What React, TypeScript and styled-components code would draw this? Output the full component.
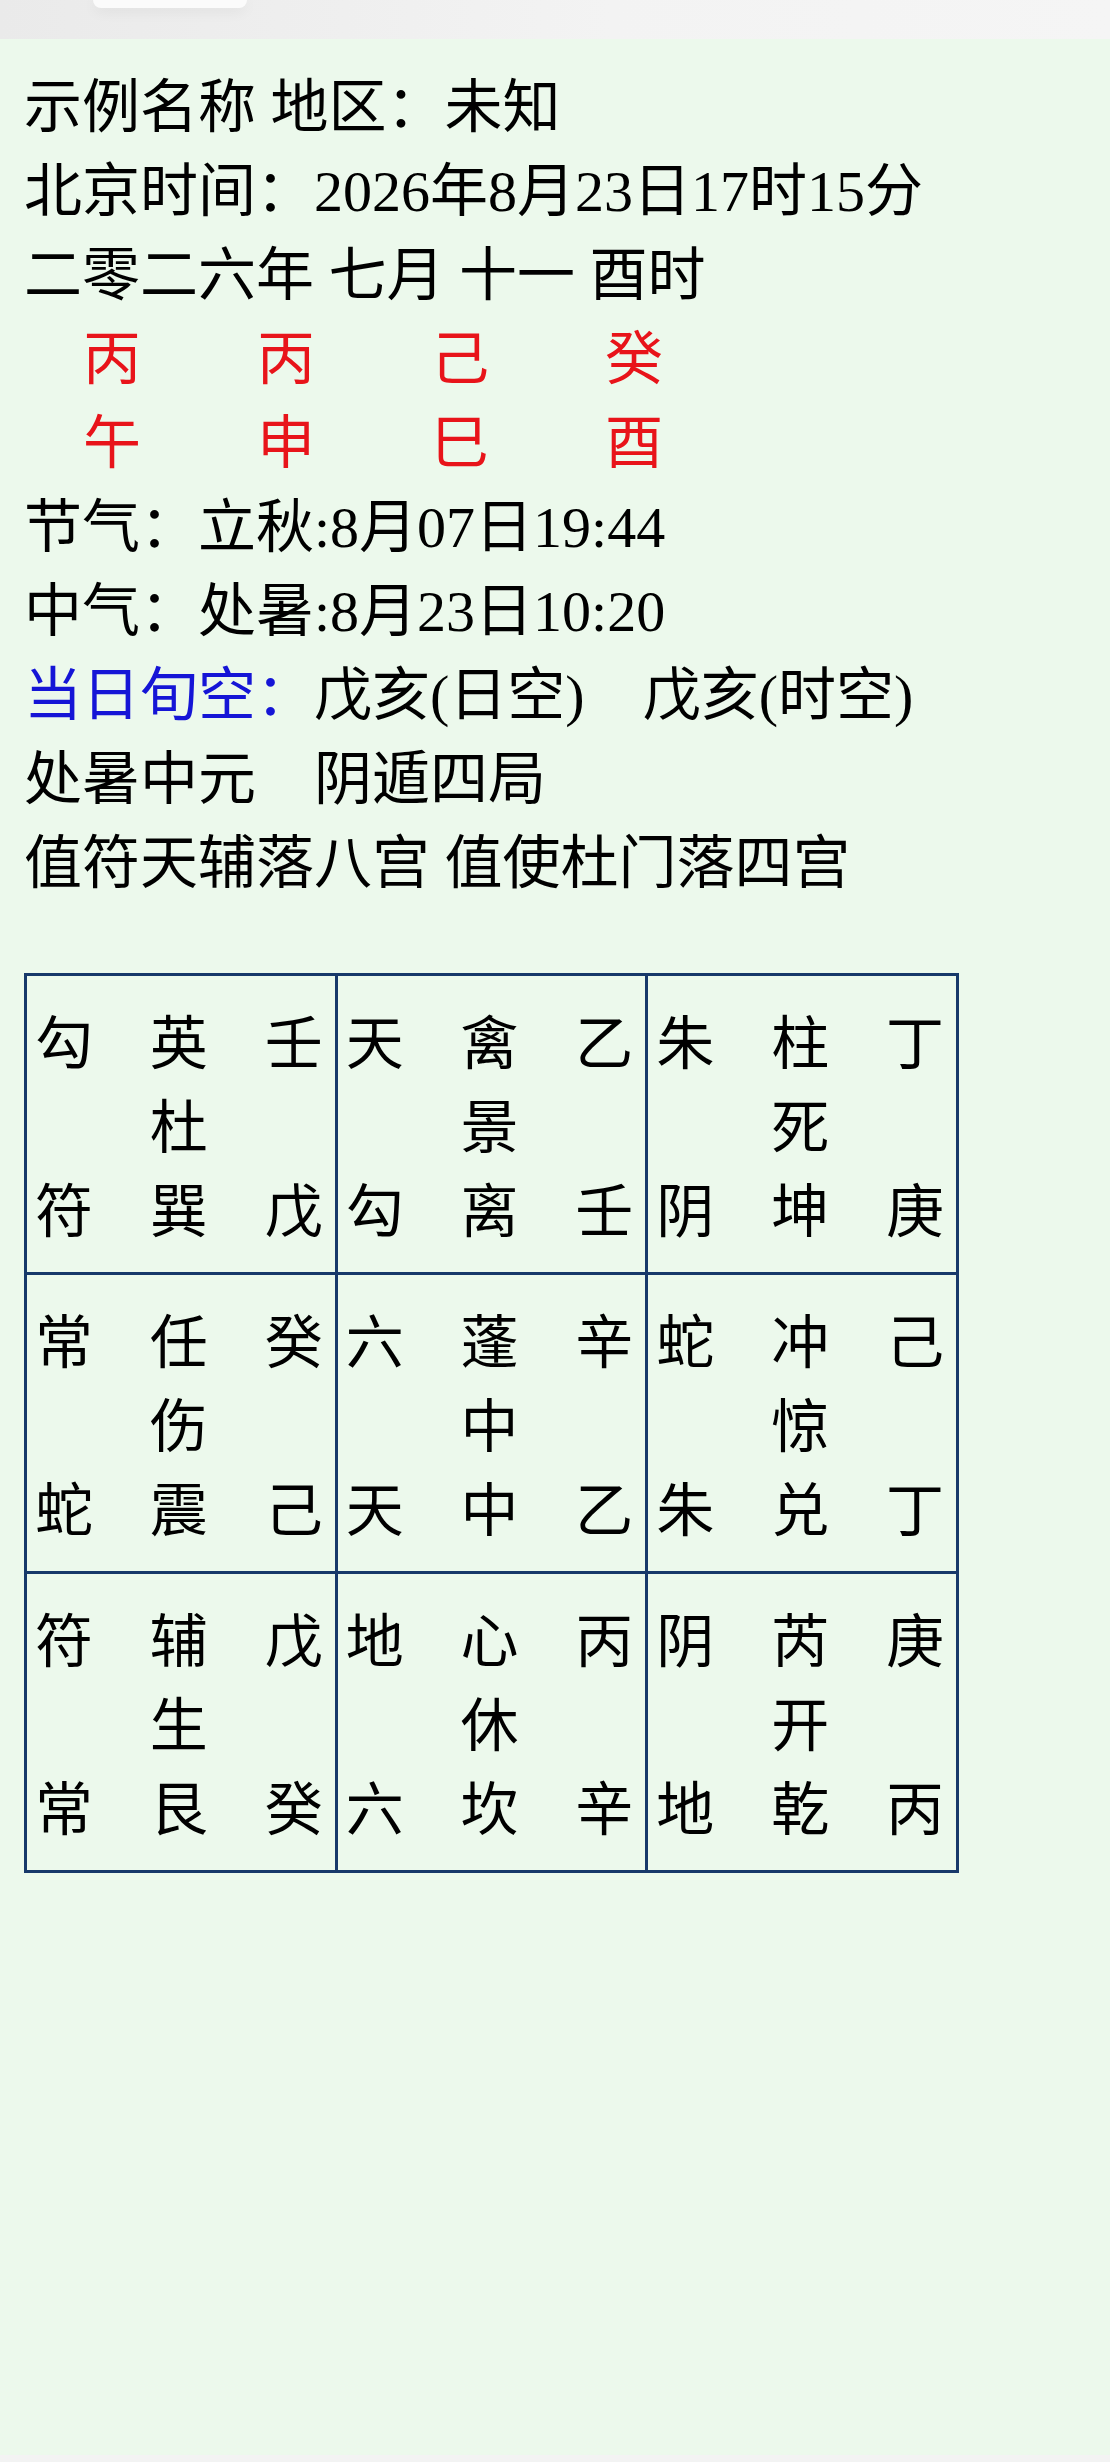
import React from "react";
import styled, { createGlobalStyle } from "styled-components";

const Global = createGlobalStyle`
  html, body { margin: 0; padding: 0; background: #f3f3f3; }
  #root { width: 1110px; }
`;

const Page = styled.div`
  display: flex;
  flex-direction: column;
  height: 2462px;
  width: 1110px;
  font-family: "Liberation Serif", "Noto Sans CJK SC", serif;
  font-size: 58px;
  line-height: 84px;
  color: #000;
`;

const TopBar = styled.div`
  height: 39px;
  flex: none;
  display: flex;
  padding-left: 93px;
  background: linear-gradient(to right, #eaeaea 0%, #eeeeee 25%, #f3f3f3 55%, #f5f5f5 100%);
`;

const Pill = styled.div`
  width: 154px;
  height: 8px;
  background: #fbfbfb;
  border-radius: 0 0 22px 22px;
  box-shadow: 0 3px 14px rgba(0, 0, 0, 0.07);
`;

const Main = styled.main`
  flex: 1;
  background: #ecf9ec;
  padding: 27px 0 0 24px;
`;

const BottomStrip = styled.div`
  height: 7px;
  flex: none;
  background: #f3f3f3;
`;

const Line = styled.div`
  white-space: pre;
  height: 84px;
`;

const Blue = styled.span`
  color: #1515d6;
`;

const GanZhiRow = styled.div`
  display: flex;
  gap: 116px;
  padding-left: 59px;
  height: 84px;
  color: #e8141a;
`;

const GanZhi = styled.span`
  width: 58px;
`;

const Board = styled.div`
  margin-top: 67px;
  width: 935px;
  display: grid;
  grid-template-columns: repeat(3, 1fr);
  gap: 3px;
  padding: 3px;
  box-sizing: border-box;
  background: #17396a;
`;

const Palace = styled.div`
  background: #ecf9ec;
  padding: 27px 12px 17px 8px;
  display: flex;
  flex-direction: column;
`;

const PalaceRow = styled.div`
  display: flex;
  justify-content: space-between;
  height: 84px;
`;

const Slot = styled.span`
  width: 58px;
  text-align: center;
`;

type Cell = [string[], string[], string[]];

const palaces: Cell[] = [
  [["勾", "英", "壬"], ["", "杜", ""], ["符", "巽", "戊"]],
  [["天", "禽", "乙"], ["", "景", ""], ["勾", "离", "壬"]],
  [["朱", "柱", "丁"], ["", "死", ""], ["阴", "坤", "庚"]],
  [["常", "任", "癸"], ["", "伤", ""], ["蛇", "震", "己"]],
  [["六", "蓬", "辛"], ["", "中", ""], ["天", "中", "乙"]],
  [["蛇", "冲", "己"], ["", "惊", ""], ["朱", "兑", "丁"]],
  [["符", "辅", "戊"], ["", "生", ""], ["常", "艮", "癸"]],
  [["地", "心", "丙"], ["", "休", ""], ["六", "坎", "辛"]],
  [["阴", "芮", "庚"], ["", "开", ""], ["地", "乾", "丙"]],
];

export default function App() {
  return (
    <>
      <Global />
      <Page>
        <TopBar>
          <Pill />
        </TopBar>
        <Main>
          <Line>示例名称 地区：未知</Line>
          <Line>北京时间：2026年8月23日17时15分</Line>
          <Line>二零二六年 七月 十一 酉时</Line>
          <GanZhiRow>
            {["丙", "丙", "己", "癸"].map((c, i) => (
              <GanZhi key={i}>{c}</GanZhi>
            ))}
          </GanZhiRow>
          <GanZhiRow>
            {["午", "申", "巳", "酉"].map((c, i) => (
              <GanZhi key={i}>{c}</GanZhi>
            ))}
          </GanZhiRow>
          <Line>节气：立秋:8月07日19:44</Line>
          <Line>中气：处暑:8月23日10:20</Line>
          <Line>
            <Blue>当日旬空：</Blue>
            {"戊亥(日空)　戊亥(时空)"}
          </Line>
          <Line>处暑中元　阴遁四局</Line>
          <Line>值符天辅落八宫 值使杜门落四宫</Line>
          <Board>
            {palaces.map((cell, i) => (
              <Palace key={i}>
                {cell.map((row, r) => (
                  <PalaceRow key={r}>
                    {row.map((ch, k) => (
                      <Slot key={k}>{ch}</Slot>
                    ))}
                  </PalaceRow>
                ))}
              </Palace>
            ))}
          </Board>
        </Main>
        <BottomStrip />
      </Page>
    </>
  );
}
